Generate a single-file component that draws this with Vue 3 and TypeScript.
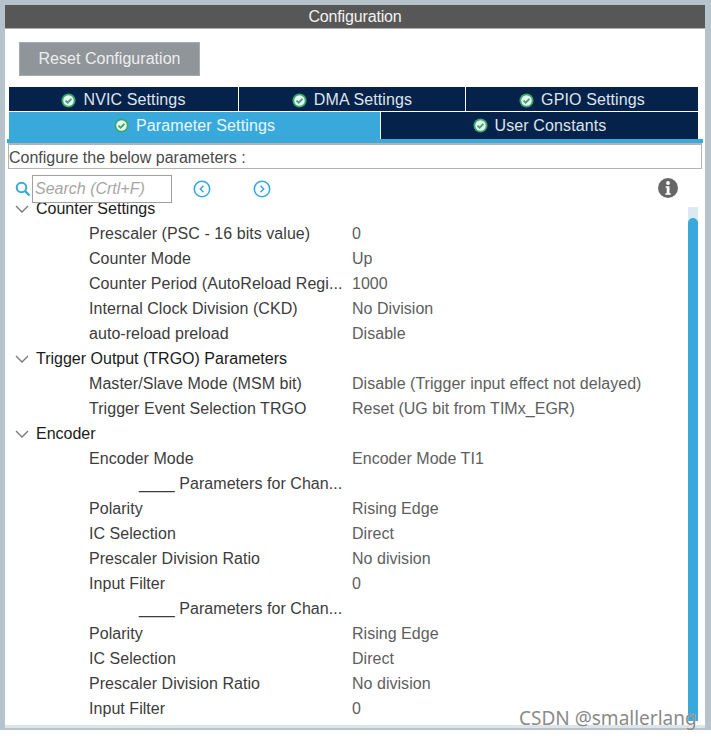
<script setup lang="ts">
type Row = { kind: 'group' | 'item'; label: string; value?: string; sub?: boolean }
const rows: Row[] = [
  { kind: 'group', label: 'Counter Settings' },
  { kind: 'item', label: 'Prescaler (PSC - 16 bits value)', value: '0' },
  { kind: 'item', label: 'Counter Mode', value: 'Up' },
  { kind: 'item', label: 'Counter Period (AutoReload Regi...', value: '1000' },
  { kind: 'item', label: 'Internal Clock Division (CKD)', value: 'No Division' },
  { kind: 'item', label: 'auto-reload preload', value: 'Disable' },
  { kind: 'group', label: 'Trigger Output (TRGO) Parameters' },
  { kind: 'item', label: 'Master/Slave Mode (MSM bit)', value: 'Disable (Trigger input effect not delayed)' },
  { kind: 'item', label: 'Trigger Event Selection TRGO', value: 'Reset (UG bit from TIMx_EGR)' },
  { kind: 'group', label: 'Encoder' },
  { kind: 'item', label: 'Encoder Mode', value: 'Encoder Mode TI1' },
  { kind: 'item', label: '____ Parameters for Chan...', sub: true },
  { kind: 'item', label: 'Polarity', value: 'Rising Edge' },
  { kind: 'item', label: 'IC Selection', value: 'Direct' },
  { kind: 'item', label: 'Prescaler Division Ratio', value: 'No division' },
  { kind: 'item', label: 'Input Filter', value: '0' },
  { kind: 'item', label: '____ Parameters for Chan...', sub: true },
  { kind: 'item', label: 'Polarity', value: 'Rising Edge' },
  { kind: 'item', label: 'IC Selection', value: 'Direct' },
  { kind: 'item', label: 'Prescaler Division Ratio', value: 'No division' },
  { kind: 'item', label: 'Input Filter', value: '0' },
]
const topTabs = ['NVIC Settings', 'DMA Settings', 'GPIO Settings']
</script>

<template>
  <div class="frame">
    <div class="panel">
      <header class="title">Configuration</header>
      <div class="reset-wrap"><button class="reset">Reset Configuration</button></div>
      <div class="tabs top">
        <div v-for="t in topTabs" :key="t" class="tab">
          <svg class="ok" viewBox="0 0 16 16"><circle cx="8" cy="8" r="7.5" fill="#3aa76d" /><circle cx="8" cy="8" r="5.6" fill="#e8f5ee" /><path d="M4.8 8.1l2.3 2.3 4-4.2" fill="none" stroke="#3aa76d" stroke-width="2" /></svg>
          <span>{{ t }}</span>
        </div>
      </div>
      <div class="tabs bottom">
        <div class="tab active">
          <svg class="ok" viewBox="0 0 16 16"><circle cx="8" cy="8" r="7.5" fill="#3aa76d" /><circle cx="8" cy="8" r="5.6" fill="#e8f5ee" /><path d="M4.8 8.1l2.3 2.3 4-4.2" fill="none" stroke="#3aa76d" stroke-width="2" /></svg>
          <span>Parameter Settings</span>
        </div>
        <div class="tab user">
          <svg class="ok" viewBox="0 0 16 16"><circle cx="8" cy="8" r="7.5" fill="#3aa76d" /><circle cx="8" cy="8" r="5.6" fill="#e8f5ee" /><path d="M4.8 8.1l2.3 2.3 4-4.2" fill="none" stroke="#3aa76d" stroke-width="2" /></svg>
          <span>User Constants</span>
        </div>
      </div>
      <div class="hint">Configure the below parameters :</div>
      <div class="search-row">
        <svg class="mag" viewBox="0 0 16 16"><circle cx="6.5" cy="6.5" r="4.8" fill="none" stroke="#39a9dc" stroke-width="2" /><path d="M10 10l4.5 4.5" stroke="#39a9dc" stroke-width="2.4" /></svg>
        <div class="search">Search (Crtl+F)</div>
        <svg class="nav first" viewBox="0 0 18 18"><circle cx="9" cy="9" r="7.7" fill="none" stroke="#39a9dc" stroke-width="1.6" /><path d="M10.5 5.8L7.3 9l3.2 3.2" fill="none" stroke="#39a9dc" stroke-width="1.6" /></svg>
        <svg class="nav" viewBox="0 0 18 18"><circle cx="9" cy="9" r="7.7" fill="none" stroke="#39a9dc" stroke-width="1.6" /><path d="M7.5 5.8L10.7 9l-3.2 3.2" fill="none" stroke="#39a9dc" stroke-width="1.6" /></svg>
        <svg class="info" viewBox="0 0 20 20"><circle cx="10" cy="10" r="10" fill="#666" /><circle cx="10" cy="5" r="1.9" fill="#fff" /><path d="M7.6 8.2h3.9v7h1.3v1.6H7.4v-1.6h1.3v-5.4H7.6z" fill="#fff" /></svg>
      </div>
      <div class="tree-wrap">
        <div class="tree">
          <div v-for="(r, i) in rows" :key="i" class="row" :class="r.kind">
            <template v-if="r.kind === 'group'">
              <svg class="chev" viewBox="0 0 14 8"><path d="M1 1l6 6 6-6" fill="none" stroke="#777" stroke-width="1.3" /></svg>
              <span class="group-label">{{ r.label }}</span>
            </template>
            <template v-else>
              <span class="label" :class="{ sub: r.sub }">{{ r.label }}</span>
              <span class="value">{{ r.value }}</span>
            </template>
          </div>
        </div>
        <div class="track"><div class="thumb"></div></div>
      </div>
    </div>
    <div class="mark">CSDN @smallerlang</div>
  </div>
</template>

<style>
html, body { margin: 0; background: #fff; }
</style>

<style scoped>
.frame {
  position: relative;
  width: 711px;
  height: 730px;
  box-sizing: border-box;
  padding: 5px 6px 2px 5px;
  background: #b6c3ca;
  font-family: "Liberation Sans", Arial, sans-serif;
  font-size: 16px;
  overflow: hidden;
}
.panel {
  height: 100%;
  box-sizing: border-box;
  background: #fff;
  border-bottom: 3px solid #dde5e9;
  display: flex;
  flex-direction: column;
  overflow: hidden;
}
.title {
  height: 23px;
  flex: none;
  background: #565756;
  color: #f2f2f2;
  text-align: center;
  line-height: 23px;
  letter-spacing: -0.15px;
  border-bottom: 1px solid #b0b0b0;
  box-sizing: content-box;
}
.reset-wrap { padding: 13px 14px 11px; flex: none; }
.reset {
  display: block;
  width: 181px;
  height: 34px;
  border: 1px solid #a5abae;
  background: #8f9599;
  color: #eceeef;
  font: inherit;
  letter-spacing: 0.03px;
  padding: 0;
}
.tabs { display: flex; margin: 0 0 0 4px; flex: none; }
.tab {
  display: flex;
  align-items: center;
  justify-content: center;
  gap: 7px;
  background: #04224a;
  color: #dfe4ea;
  letter-spacing: 0.12px;
}
.top { height: 24px; gap: 1px; }
.top .tab { flex: 229px 0 0; padding-top: 2px; box-sizing: border-box; }
.top .tab:nth-child(2) { flex-basis: 226px; }
.top .tab:nth-child(3) { flex-basis: 232px; }
.bottom {
  height: 31px;
  box-sizing: border-box;
  margin: 1px 2px 0 2px;
  padding: 0 5px 0 2px;
  gap: 1px;
  border-bottom: 4px solid #39a9dc;
}
.bottom .active { flex: 371px 0 0; background: #39a9dc; color: #e9f6fc; }
.bottom .user { flex: 1; }
.ok { width: 15px; height: 15px; flex: none; }
.hint {
  flex: none;
  margin: 0 3px 0 3px;
  height: 26px;
  box-sizing: border-box;
  border: 1px solid #b3b3b3;
  border-top-width: 2px;
  line-height: 25px;
  color: #4a4a4a;
}
.search-row {
  flex: none;
  height: 34px;
  box-sizing: border-box;
  padding: 5px 0 0 10px;
  display: flex;
  align-items: center;
  position: relative;
}
.mag { width: 16px; height: 16px; margin-right: 1px; }
.search {
  width: 140px;
  height: 28px;
  box-sizing: border-box;
  border: 1px solid #a0a0a0;
  padding-left: 2px;
  line-height: 26px;
  font-style: italic;
  color: #a6a6a6;
}
.nav { width: 18px; height: 18px; margin-left: 42px; }
.nav.first { margin-left: 21px; }
.info { width: 20px; height: 20px; position: absolute; left: 653px; top: 9px; }
.tree-wrap { flex: 1; position: relative; overflow: hidden; min-height: 0; }
.tree { margin-top: -7px; }
.row { height: 25px; display: flex; align-items: center; white-space: nowrap; color: #3c3c3c; }
.group { padding-left: 10px; color: #1a1a1a; }
.chev { width: 14px; height: 8px; margin-right: 7px; flex: none; }
.label { width: 263px; padding-left: 84px; flex: none; overflow: hidden; letter-spacing: 0.05px; }
.label.sub { padding-left: 134px; width: 213px; }
.value { color: #5e5e5e; letter-spacing: 0.03px; }
.track {
  position: absolute;
  right: 7px;
  top: 4px;
  bottom: 4px;
  width: 10px;
  background: #dbe9f5;
}
.thumb {
  position: absolute;
  left: 0; right: 0; top: 11px; bottom: 0;
  background: #39a9dc;
  border-radius: 5px 5px 0 0;
}
.mark {
  position: absolute;
  left: 519px;
  top: 705px;
  color: #8a8a8a;
  font-family: "Noto Sans", sans-serif;
  font-size: 19px;
  line-height: 26px;
  text-shadow: 0 0 1px rgba(255,255,255,.8);
}
</style>
